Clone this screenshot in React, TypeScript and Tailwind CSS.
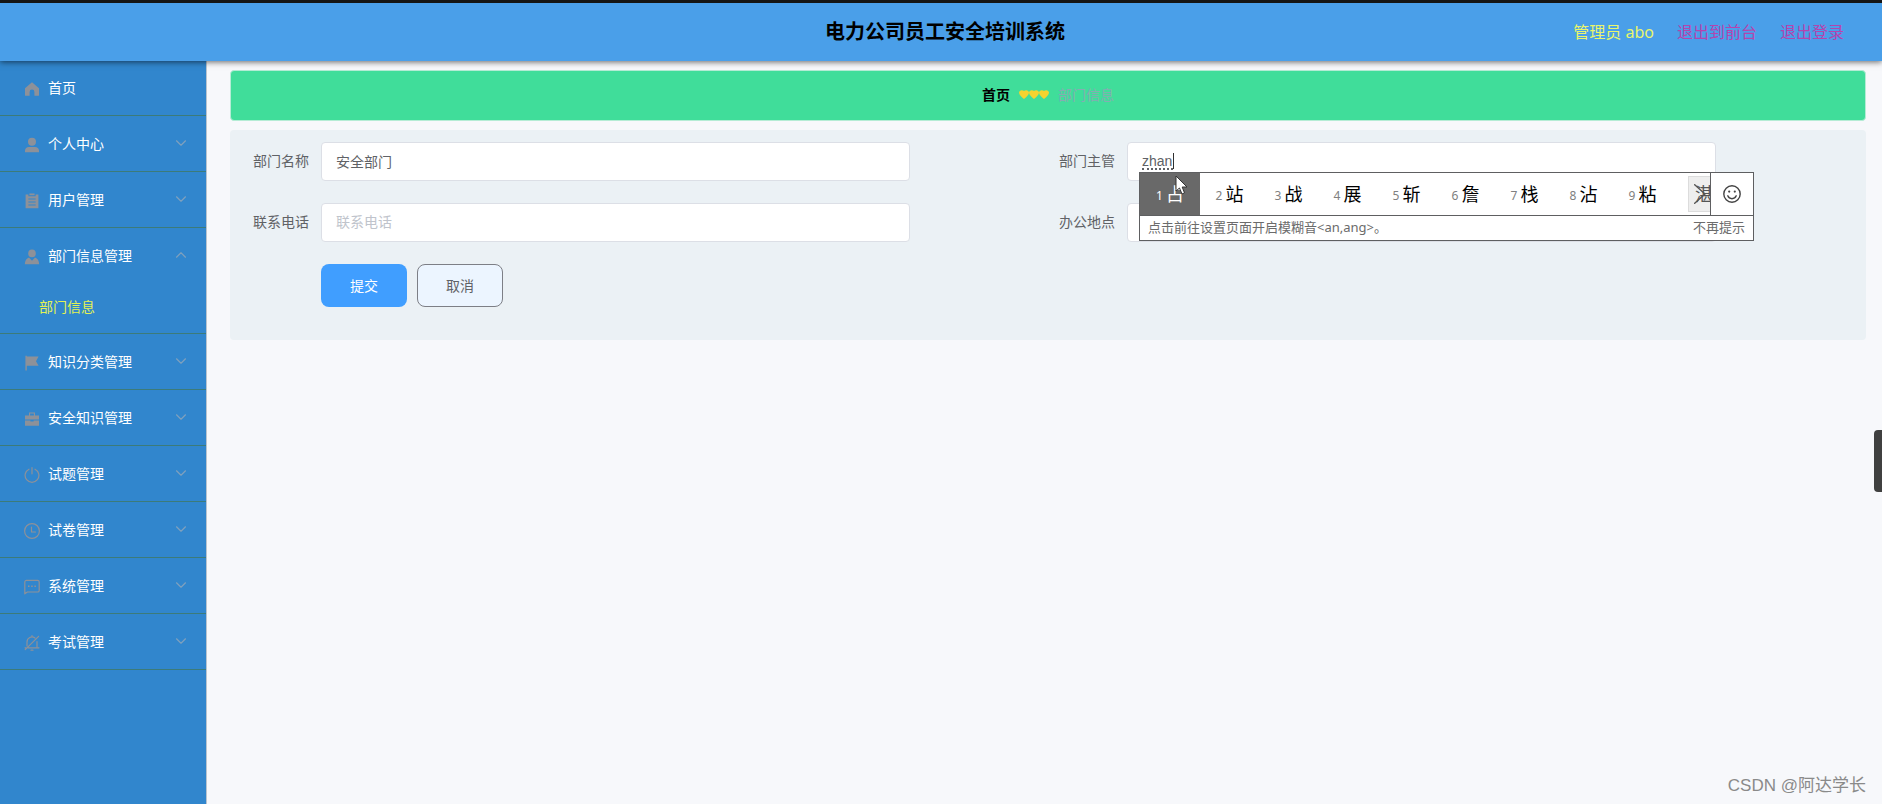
import { useState } from "react";
import type { ReactNode } from "react";

type MenuItem = { label: string; icon: ReactNode; children?: string[]; leaf?: boolean };

const stroke = { fill: "none", stroke: "currentColor", strokeWidth: 1.2, strokeLinecap: "round", strokeLinejoin: "round" } as const;

const icons = {
  home: <path d="M8 1.2 15 7.2V14.2a.6.6 0 0 1-.6.6H10.4V11A2.4 2.4 0 0 0 5.6 11v3.800H1.6a.6.6 0 0 1-.6-.6V7.200z" />,
  user: <path d="M8 .8a4 4 0 1 1 0 8 4 4 0 0 1 0-8zM1 15.200v-1.600a4 4 0 0 1 4-3.600h6a4 4 0 0 1 4 3.600v1.600z" />,
  order: <path fillRule="evenodd" d="M1.600 1.600H4.400V3.200h7.200V1.600h2.800v13.600H1.600zM5.400.6h5.200v1.600H5.400zM4.400 5.400v1.100h7.200V5.400zm0 3v1.100h7.200V8.400zm0 3v1.100h7.200v-1.100z" />,
  custom: <path d="M8 .6a3.800 3.800 0 1 1 0 7.600A3.800 3.800 0 0 1 8 .6zM5 8.600 8 11.800 11 8.600c2.600.8 4 3.200 4.200 6.600H.8C1 11.800 2.400 9.400 5 8.600z" />,
  flag: <path d="M1.400.8h1.400v14.600H1.400zM2.800 1.400H14.600L12 6.200l2.600 4.600H2.800z" />,
  bag: <path fillRule="evenodd" d="M5 1.400h6v3h4v4H1v-4h4zM6.100 2.500v1.900h3.800V2.500zM1 9.400h5.400v1h3.200v-1H15V14.800H1z" />,
  power: <path {...stroke} d="M5 2.200a6.900 6.900 0 1 0 6 0M8 .6v6.200" />,
  clock: <path {...stroke} d="M8 .6a7.400 7.400 0 1 1 0 14.800A7.400 7.400 0 0 1 8 .6zM7.500 4v5h4" />,
  chat: (
    <>
      <path {...stroke} d="M2.400 1.400h11.200a1.600 1.600 0 0 1 1.600 1.600v8.400a1.600 1.600 0 0 1-1.600 1.600H3.400L.8 14.800V3a1.600 1.600 0 0 1 1.600-1.600z" />
      <path d="M4 6.400h1.500v1.500H4zM7.200 6.400h1.500v1.500H7.200zM10.400 6.400h1.500v1.500h-1.500z" />
    </>
  ),
  mute: <path {...stroke} d="M14.600 1.400 1.200 14.600M3 11V7a5 5 0 0 1 8-4M13 6.600v6.200M4 12.800h11M8 .6v1.200M7 15.200h2M1 12.800h1" />,
};

const menu: MenuItem[] = [
  { label: "首页", icon: icons.home, leaf: true },
  { label: "个人中心", icon: icons.user },
  { label: "用户管理", icon: icons.order },
  { label: "部门信息管理", icon: icons.custom, children: ["部门信息"] },
  { label: "知识分类管理", icon: icons.flag },
  { label: "安全知识管理", icon: icons.bag },
  { label: "试题管理", icon: icons.power },
  { label: "试卷管理", icon: icons.clock },
  { label: "系统管理", icon: icons.chat },
  { label: "考试管理", icon: icons.mute },
];

const candidates = ["占", "站", "战", "展", "斩", "詹", "栈", "沾", "粘"];

function Header() {
  return (
    <header className="relative z-10 flex h-[61px] shrink-0 items-center justify-end border-t-[3px] border-[#151515] bg-[#4a9fe9] pr-[38px] shadow-[0_1px_6px_rgba(0,0,0,0.6)]">
      <h1 className="absolute inset-x-0 pl-2 text-center text-xl leading-6 font-bold text-black">电力公司员工安全培训系统</h1>
      <div className="relative flex items-center gap-[23px] pb-px text-base leading-6">
        <span className="text-[#e9f56b]">管理员 abo</span>
        <a href="#front" className="text-[#b544ae]">退出到前台</a>
        <a href="#logout" className="text-[#b544ae]">退出登录</a>
      </div>
    </header>
  );
}

function Sidebar() {
  const [open, setOpen] = useState("部门信息管理");
  return (
    <nav className="-mt-px w-[207px] shrink-0 border-r border-[#b9c4cf] bg-[#3186cd] text-sm text-white">
      <ul>
        {menu.map((item) => {
          const expanded = open === item.label;
          return (
            <li key={item.label} className="border-b border-[#3c7b79]">
              <button
                type="button"
                onClick={() => setOpen(expanded ? "" : item.label)}
                className="flex h-[55px] w-full items-center pt-0.5 pr-5 pl-6 text-left"
              >
                <svg viewBox="0 0 16 16" className="h-4 w-4 fill-current text-[#8d9199]">{item.icon}</svg>
                <span className="ml-2 flex-1 pb-0.5 leading-5">{item.label}</span>
                {!item.leaf && (
                  <svg viewBox="0 0 10 6" className="mb-1 h-[6px] w-[10px] text-[#7fa0bd]">
                    <path {...stroke} d={expanded ? "M.5 5.200 5 .8 9.500 5.200" : "M.5.8 5 5.200 9.500.8"} />
                  </svg>
                )}
              </button>
              {expanded && item.children?.map((child) => (
                <a key={child} href="#department" className="flex h-[50px] items-center pb-0.5 pl-[39px] text-[#e3f253]">{child}</a>
              ))}
            </li>
          );
        })}
      </ul>
    </nav>
  );
}

function Breadcrumb() {
  return (
    <div className="flex h-[51px] items-center justify-center rounded border border-[#b5ecd5] bg-[#40dd9a] pb-0.5 text-sm">
      <a href="#home" className="font-bold text-black">首页</a>
      <span className="mx-[9px] flex">
        {[0, 1, 2].map((n) => (
          <svg key={n} viewBox="0 0 10 9" className="h-[9px] w-[10px] fill-[#f5d32f]">
            <path d="M5 9C2.500 7 0 5 0 2.600 0 .2 3.200-.6 5 .9 6.800-.6 10 .2 10 2.600 10 5 7.500 7 5 9z" />
          </svg>
        ))}
      </span>
      <span className="text-[#84adb2]">部门信息</span>
    </div>
  );
}

type FieldProps = { id: string; label: string; value?: string; latin?: boolean; children?: ReactNode };

function Field({ id, label, value, latin, children }: FieldProps) {
  return (
    <div className="flex items-center">
      <label htmlFor={id} className="w-[79px] shrink-0 pr-3 pb-0.5 text-right text-sm text-[#606266]">{label}</label>
      <div className="relative flex-1">
        <input
          id={id}
          defaultValue={value}
          placeholder={label}
          className={
            "block h-[39px] w-[81%] rounded border border-[#dcdfe6] bg-white px-[14px] pb-0.5 text-sm text-[#606266] placeholder:text-[#c0c4cc] outline-none" +
            (latin ? " font-['Liberation_Sans',sans-serif]" : "")
          }
        />
        {children}
      </div>
    </div>
  );
}

// Input method window, floats over the form below the text caret
function CandidateWindow() {
  return (
    <div className="absolute top-[30px] left-3 z-20 w-[615px] border border-[#5e5f61] bg-white">
      <div className="flex h-[42px]">
        <ol className="relative flex min-w-0 flex-1 overflow-hidden">
          {candidates.map((char, i) => (
            <li
              key={char}
              className={"flex shrink-0 items-center justify-center gap-[3px] " + (i === 0 ? "w-[60px] bg-[#696969] text-white" : "w-[59px] text-black")}
            >
              <span className={"pt-1 text-xs " + (i === 0 ? "" : "text-[#808080]")}>{i + 1}</span>
              <span className="text-lg leading-6">{char}</span>
            </li>
          ))}
          <li className="absolute inset-y-[3px] right-0 w-[22px] overflow-hidden border border-r-0 border-[#dcdcdc] bg-[#eeeeee] text-[#555555]">
            <span className="block pt-[5px] pl-[6px] text-lg leading-6">湛</span>
            <svg viewBox="0 0 12 20" className="absolute top-[7px] left-[5px] h-5 w-3">
              <path {...stroke} strokeWidth="1.400" d="M.7.700 11 10 .7 19.300" />
            </svg>
          </li>
        </ol>
        <button type="button" aria-label="表情" className="flex w-[43px] items-center justify-center border-l border-[#5e5f61] text-[#444444]">
          <svg viewBox="0 0 18 18" className="h-[18px] w-[18px]">
            <path {...stroke} strokeWidth="1.400" d="M9 .8a8.200 8.200 0 1 1 0 16.400A8.200 8.200 0 0 1 9 .8zM4.800 10.800a4.500 4.500 0 0 0 8.400 0" />
            <circle cx="6.200" cy="6.600" r="1.100" fill="currentColor" />
            <circle cx="11.800" cy="6.600" r="1.100" fill="currentColor" />
          </svg>
        </button>
      </div>
      <div className="flex h-[25px] items-center justify-between border-t border-[#5e5f61] px-2 pb-px text-[13px] text-[#6b6b6b]">
        <span>点击前往设置页面开启模糊音&lt;an,ang&gt;。</span>
        <button type="button">不再提示</button>
      </div>
    </div>
  );
}

function DepartmentForm() {
  return (
    <form className="mt-[9px] rounded-sm bg-[#ebf1f5] px-3 pt-3 pb-[33px]" onSubmit={(e) => e.preventDefault()}>
      <div className="grid grid-cols-2 gap-y-[22px]">
        <Field id="name" label="部门名称" value="安全部门" />
        <Field id="manager" label="部门主管" value="zhan" latin>
          <span className="absolute top-[26px] left-[15px] w-[31px] border-b-2 border-dotted border-[#606266]" />
          <span className="absolute top-[11px] left-[46px] h-4 w-px bg-[#303030]" />
          <CandidateWindow />
          <svg viewBox="0 0 13 20" className="absolute top-[33px] left-12 z-30 h-5 w-[13px]">
            <path d="M1 1v15l3.500-3 2.500 6 2.500-1.100L7.200 12H12z" fill="#fff" stroke="#333" />
          </svg>
        </Field>
        <Field id="phone" label="联系电话" />
        <Field id="place" label="办公地点" />
      </div>
      <div className="mt-[22px] flex gap-[10px] pl-[79px] text-sm">
        <button type="submit" className="h-[43px] w-[86px] rounded-lg bg-[#409eff] text-white">提交</button>
        <button type="button" className="h-[43px] w-[86px] rounded-lg border border-[#7d7f86] bg-[#ecf5ff] text-[#606266]">取消</button>
      </div>
    </form>
  );
}

export default function App() {
  return (
    <div className="relative flex min-h-screen flex-col overflow-hidden bg-[#f7f8fb] font-['Noto_Sans','Noto_Sans_CJK_SC',sans-serif]">
      <Header />
      <div className="flex flex-1">
        <Sidebar />
        <main className="min-w-0 flex-1 pt-[9px] pr-4 pl-[23px]">
          <Breadcrumb />
          <DepartmentForm />
        </main>
      </div>
      <div className="absolute top-[430px] right-0 h-[62px] w-2 rounded-l-sm bg-[#404040]" />
      <p className="absolute right-4 bottom-1 text-[17px] leading-7 text-[#8a8a8a] font-['Liberation_Sans','Noto_Sans_CJK_SC',sans-serif]">CSDN @阿达学长</p>
    </div>
  );
}
